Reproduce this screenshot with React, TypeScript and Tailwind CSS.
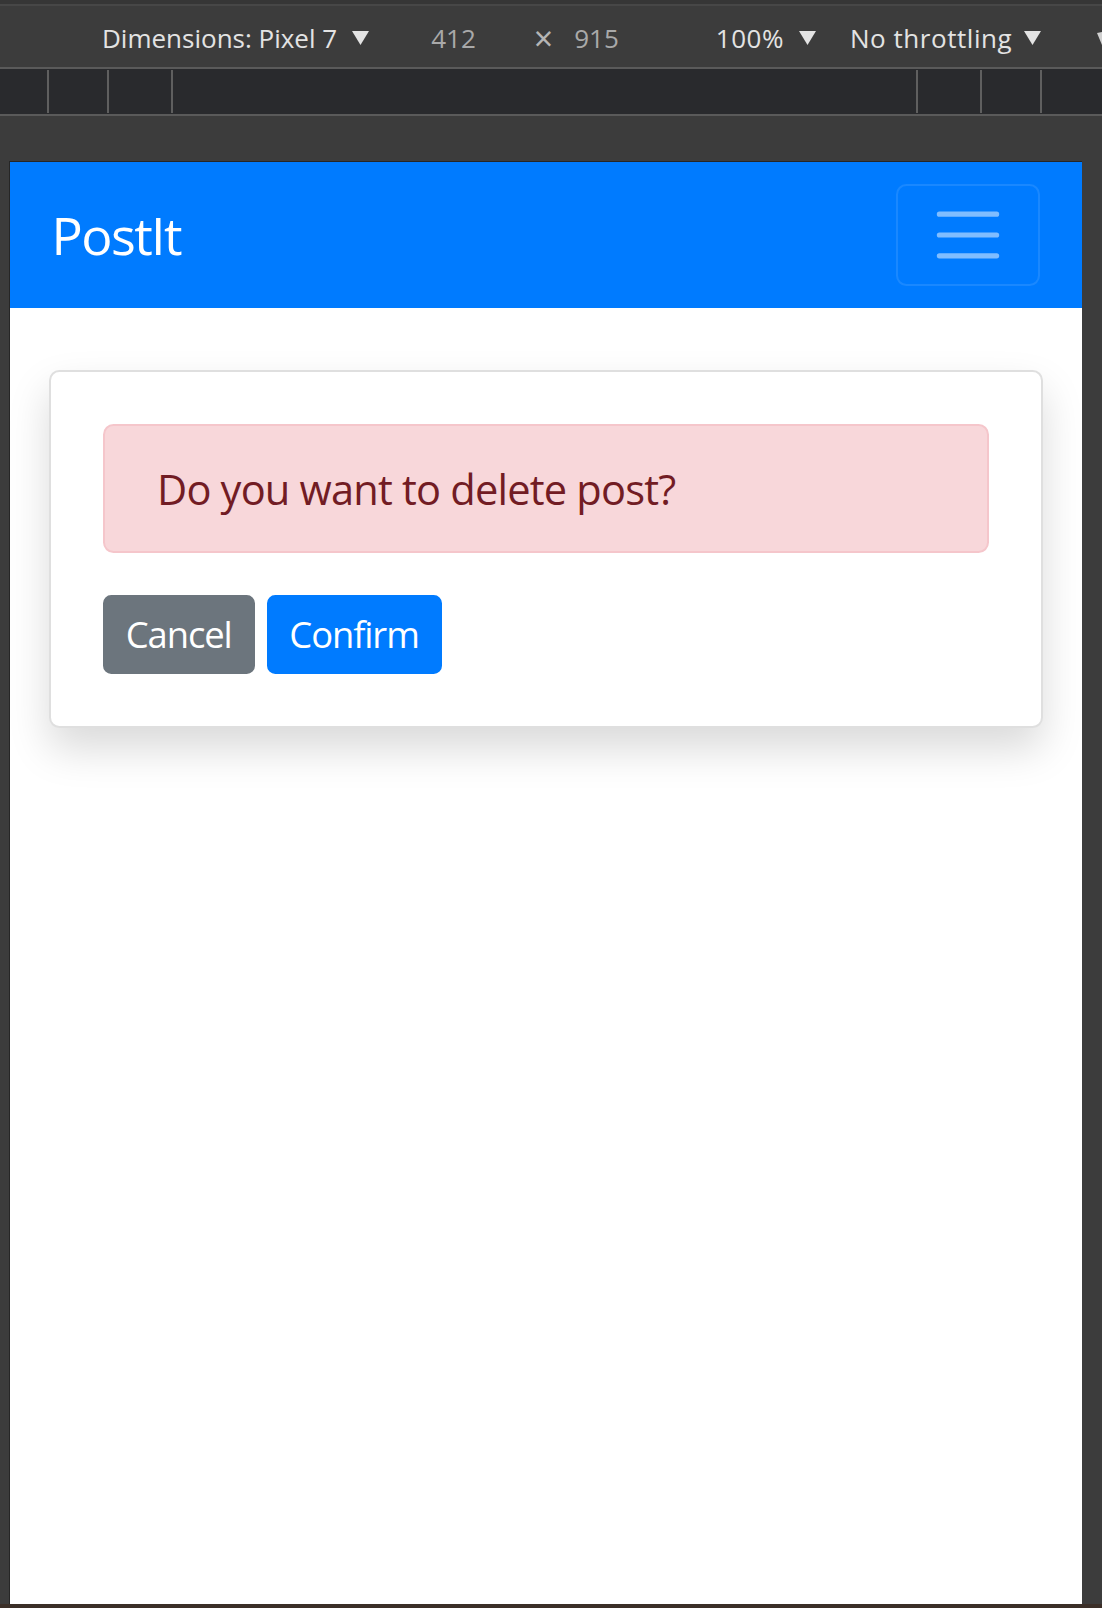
import React from 'react';

const Caret = () => (
  <svg width="17" height="14" viewBox="0 0 17 14" className="inline-block">
    <path d="M0 0h17L8.5 14z" fill="#e3e3e3" />
  </svg>
);

const DevToolsBar = () => (
  <div className="h-[161px] bg-[#3c3c3c] flex flex-col" style={{ fontFamily: '"Open Sans", "Noto Sans", sans-serif' }}>
    <div className="h-[4px] bg-[#363636]" />
    <div className="h-[2px] bg-[#474747]" />
    <div className="h-[61px] pt-[3px] flex items-center text-[26px] text-[#e3e3e3] whitespace-nowrap overflow-hidden">
      <span className="ml-[102px]">Dimensions: Pixel 7</span>
      <span className="ml-[15px] flex items-center"><Caret /></span>
      <span className="ml-[62px] text-[#a9a9a9]">412</span>
      <span className="ml-[58px] text-[#b5b5b5] text-[34px] leading-none">×</span>
      <span className="ml-[21px] text-[#a9a9a9]">915</span>
      <span className="ml-[97px] tracking-[0.5px]">100%</span>
      <span className="ml-[15px] flex items-center"><Caret /></span>
      <span className="ml-[34px] tracking-[0.55px]">No throttling</span>
      <span className="ml-[12px] flex items-center"><Caret /></span>
      <span className="ml-[56px] flex items-center">
        <svg width="10" height="14" viewBox="0 0 10 14"><path d="M0 2l5 12h5V0z" fill="#d0d0d0" /></svg>
      </span>
    </div>
    <div className="h-[2px] bg-[#5a5a5a]" />
    <div className="h-[45px] bg-[#292a2d] flex items-stretch">
      <div className="ml-[47px] w-[2px] my-[1px] bg-[#5f5f5f]" />
      <div className="ml-[58px] w-[2px] my-[1px] bg-[#5f5f5f]" />
      <div className="ml-[62px] w-[2px] my-[1px] bg-[#5f5f5f]" />
      <div className="ml-[743px] w-[2px] my-[1px] bg-[#5f5f5f]" />
      <div className="ml-[62px] w-[2px] my-[1px] bg-[#5f5f5f]" />
      <div className="ml-[58px] w-[2px] my-[1px] bg-[#5f5f5f]" />
    </div>
    <div className="h-[2px] bg-[#5a5a5a]" />
  </div>
);

const Navbar = () => (
  <nav className="h-[146px] bg-[#007bff] flex items-center justify-between px-[41.6px]">
    <a className="text-[52px] leading-[1.5] text-white tracking-[-1.6px]">PostIt</a>
    <button className="border-[2.6px] border-white/10 rounded-[10.4px] py-[10.4px] px-[31.2px] flex">
      <svg width="78" height="78" viewBox="0 0 30 30">
        <path d="M4 7h22M4 15h22M4 23h22" stroke="rgba(255,255,255,0.5)" strokeWidth="2" strokeLinecap="round" />
      </svg>
    </button>
  </nav>
);

const btn = "text-white text-[36.4px] leading-[1.5] px-[20.8px] py-[10.4px] rounded-[8.3px] border-[2.6px] tracking-[-1.1px]";

const DeleteCard = () => (
  <div className="mx-[39px] mt-[62.4px] bg-white border-[2.6px] border-black/[0.125] rounded-[10.4px] shadow-[0_20.8px_41.6px_rgba(0,0,0,0.15)]">
    <div className="p-[52px]">
      <div className="bg-[#f8d7da] border-[2.6px] border-[#f5c6cb] text-[#721c24] rounded-[10.4px] py-[31.2px] px-[52px] text-[41.6px] leading-[1.5] mb-[41.6px] tracking-[-0.8px]">
        Do you want to delete post?
      </div>
      <div className="flex gap-[12px]">
        <button className={`${btn} bg-[#6c757d] border-[#6c757d]`}>Cancel</button>
        <button className={`${btn} bg-[#007bff] border-[#007bff]`}>Confirm</button>
      </div>
    </div>
  </div>
);

export default function App() {
  return (
    <div className="w-[1102px] h-[1608px] bg-[#3c3c3c] overflow-hidden flex flex-col">
      <DevToolsBar />
      <div className="flex h-[1443px]">
        <div
          className="ml-[9px] w-[1073px] bg-white border-l border-t border-[#262626]"
          style={{ fontFamily: '"Open Sans", "Noto Sans", sans-serif' }}
        >
          <Navbar />
          <DeleteCard />
        </div>
      </div>
      <div className="h-[4px] bg-[#3b2f28]" />
    </div>
  );
}
